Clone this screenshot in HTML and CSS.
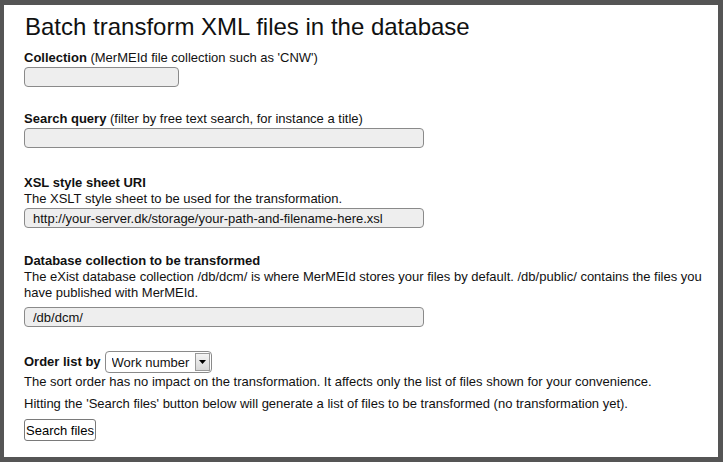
FILE: index.html
```html
<!DOCTYPE html>
<html>
<head>
<meta charset="utf-8">
<title>Batch transform</title>
<link rel="stylesheet" href="styles.css">
</head>
<body>
<div class="page">
  <h1 class="title">Batch transform XML files in the database</h1>
  <form class="form">
    <div class="field f-collection">
      <div class="label"><b>Collection</b> (MerMEId file collection such as 'CNW')</div>
      <input class="text short" type="text" value="">
    </div>
    <div class="field f-query">
      <div class="label"><b>Search query</b> (filter by free text search, for instance a title)</div>
      <input class="text wide" type="text" value="">
    </div>
    <div class="field f-xsl">
      <div class="label"><b>XSL style sheet URI</b></div>
      <div class="desc">The XSLT style sheet to be used for the transformation.</div>
      <input class="text wide" type="text" value="http://your-server.dk/storage/your-path-and-filename-here.xsl">
    </div>
    <div class="field f-db">
      <div class="label"><b>Database collection to be transformed</b></div>
      <div class="desc">The eXist database collection /db/dcm/ is where MerMEId stores your files by default. /db/public/ contains the files you have published with MerMEId.</div>
      <input class="text wide" type="text" value="/db/dcm/">
    </div>
    <div class="field f-order">
      <div class="order-row">
        <b class="order-label">Order list by</b>
        <span class="select">
          <select class="select-input"><option>Work number</option></select>
          <span class="select-arrow"><svg width="7" height="4" viewBox="0 0 7 4"><path d="M0 0H7L3.5 4Z" fill="#000"/></svg></span>
        </span>
      </div>
      <div class="desc">The sort order has no impact on the transformation. It affects only the list of files shown for your convenience.</div>
      <div class="desc note">Hitting the 'Search files' button below will generate a list of files to be transformed (no transformation yet).</div>
      <button class="btn" type="button">Search files</button>
    </div>
  </form>
</div>
</body>
</html>
```
FILE: styles.css
```css
html, body {
  margin: 0;
  padding: 0;
}
body {
  background: #555555;
  padding: 5px 5px 5px 4px;
  font-family: "Liberation Sans", Arial, sans-serif;
  color: #111;
}
.page {
  background: #fff;
  height: 452px;
  box-sizing: border-box;
  padding: 8px 0 0 20px;
}
.title {
  margin: 0;
  font-size: 24px;
  line-height: 28px;
  font-weight: normal;
  padding-left: 1px;
}
.form {
  font-size: 13px;
  line-height: 16px;
}
.field {
  display: flex;
  flex-direction: column;
  align-items: flex-start;
}
.f-collection { margin-top: 9px; }
.f-query { margin-top: 24px; }
.f-xsl { margin-top: 27px; }
.f-db { margin-top: 25px; }
.f-order { margin-top: 24px; }
.label b { font-weight: bold; }
.text {
  box-sizing: border-box;
  height: 20px;
  margin: 1px 0 0 0;
  border: 1px solid #8a8a8a;
  border-radius: 4px;
  background: #eeeeee;
  font-family: "Liberation Sans", Arial, sans-serif;
  font-size: 13px;
  color: #111;
  padding: 0 8px;
}
.short { width: 155px; }
.wide { width: 400px; }
.f-db .text { margin-top: 6px; }
.order-row {
  display: flex;
  align-items: center;
  gap: 4px;
}
.select {
  display: inline-flex;
  align-items: stretch;
  box-sizing: border-box;
  height: 22px;
  border: 1px solid #8a8a8a;
  border-radius: 4px;
  background: #fff;
  padding: 1px;
}
.select-input {
  appearance: none;
  -webkit-appearance: none;
  border: 0;
  background: transparent;
  font-family: "Liberation Sans", Arial, sans-serif;
  font-size: 13px;
  color: #111;
  padding: 0 5px 0 5px;
  margin: 0;
  outline: none;
}
.select-arrow {
  width: 15px;
  box-sizing: border-box;
  border: 1px solid #9a9a9a;
  background: linear-gradient(#f4f4f4, #d8d8d8);
  display: flex;
  align-items: center;
  justify-content: center;
}
.f-order .desc { margin-top: 1px; }
.f-order .note { margin-top: 6px; }
.btn {
  margin-top: 7px;
  box-sizing: border-box;
  height: 22px;
  padding: 0 1px;
  border: 1px solid #7a7a7a;
  border-radius: 3px;
  background: #fff;
  font-family: "Liberation Sans", Arial, sans-serif;
  font-size: 13px;
  color: #000;
}
```
